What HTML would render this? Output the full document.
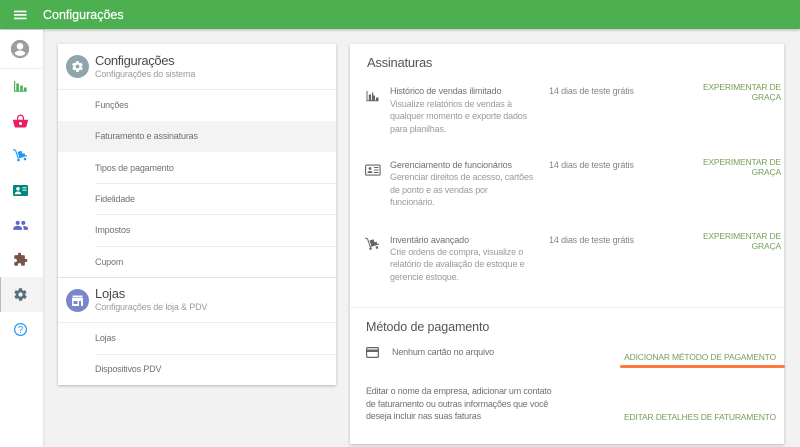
<!DOCTYPE html>
<html><head><meta charset="utf-8">
<style>
html,body{margin:0;padding:0}
body{width:800px;height:447px;overflow:hidden;background:#f2f2f2;position:relative;font-family:"Liberation Sans",sans-serif}
.t{position:absolute;white-space:nowrap;line-height:13px}
.m{font-size:9px;color:#707070;letter-spacing:-.17px}
.g{font-size:9px;color:#9a9a9a;letter-spacing:-.16px}
.lnk{font-size:8.5px;color:#769f58;text-align:right;letter-spacing:-.17px}
.h{position:absolute;background:#ececec;height:1px}
svg{position:absolute}
</style></head><body>
<div style="position:absolute;left:0;top:0;width:800px;height:29px;background:#4caf50;box-shadow:0 1px 3px rgba(0,0,0,.25)"></div>
<svg style="left:14px;top:10px" width="13" height="10" viewBox="0 0 13 10"><path fill="#fff" d="M0 .6h12.500v1.700H0zM0 4.100h12.500v1.700H0zM0 7.600h12.500v1.700H0z"/></svg>
<div class="t" style="left:43px;top:9px;font-size:12.500px;color:#fff;-webkit-text-stroke:.2px #fff">Configurações</div>

<div style="position:absolute;left:0;top:30px;width:43px;height:417px;background:#fff;box-shadow:1px 0 2px rgba(0,0,0,.08)"></div>
<div style="position:absolute;left:0;top:68px;width:43px;height:1px;background:#eee"></div>
<div style="position:absolute;left:0;top:277px;width:43px;height:35px;background:#f3f3f3;border-left:1px solid #b5bcc0;box-sizing:border-box"></div>
<svg style="left:9px;top:38px" width="22" height="22" viewBox="0 0 24 24"><path fill="#9e9e9e" d="M12 2a10 10 0 1 0 0 20 10 10 0 0 0 0-20zm0 3.400a3.600 3.600 0 1 1 0 7.200 3.600 3.600 0 0 1 0-7.200zm0 14.200a7.700 7.700 0 0 1-6-2.900c1-1.900 3.900-3 6-3s5 1.100 6 3a7.700 7.700 0 0 1-6 2.900z"/></svg>
<svg style="left:13px;top:80px" width="15" height="13" viewBox="0 0 15 13"><path fill="#4caf50" d="M1 1h1.200v10.800H1zM3.300 3.500h2.600v7.700H3.300zM7.200 5.500h2.600v5.700H7.200zM10.900 7.500h2.700v4.200h-2.700zM1 10.800h12.600v1H1z"/></svg>
<svg style="left:13px;top:114px" width="15" height="14" viewBox="0 0 15 14"><path fill="none" stroke="#e91e63" stroke-width="1.300" d="M4.600 6V4a2.900 2.900 0 0 1 5.800 0v2"/><path fill="#e91e63" d="M.5 5.800h14a.5.500 0 0 1 .5.700l-1.500 6a1.500 1.500 0 0 1-1.400 1H2.900a1.500 1.500 0 0 1-1.400-1L0 6.500a.5.500 0 0 1 .5-.7z"/><circle cx="7.500" cy="9.500" r="1.500" fill="#fff"/></svg>
<svg style="left:13px;top:149px" width="15" height="13" viewBox="0 0 15 13"><path fill="none" stroke="#2196f3" stroke-width="1.100" d="M0 .5l2.500.8 2.700 7.700 8.800-2.500"/><path fill="#2196f3" d="M4.500 3l4-1.300 1 3 2-.6 1 3-6 1.800z"/><circle cx="5.500" cy="11" r="1.300" fill="#2196f3"/><circle cx="12" cy="10" r="1.300" fill="#2196f3"/></svg>
<div style="position:absolute;left:13px;top:185px;width:14.500px;height:11px;background:#00897b;border-radius:1px"></div>
<svg style="left:13px;top:185px" width="15" height="11" viewBox="0 0 15 11"><circle cx="5" cy="3.800" r="1.800" fill="#fff"/><path fill="#fff" d="M1.800 9.200c0-1.900 1.600-2.700 3.200-2.700s3.200.8 3.200 2.700z"/><path fill="#a7d8d2" d="M9.500 2h4v1.500h-4zM9.500 4.500h4V6h-4z"/></svg>
<svg style="left:13px;top:218px" width="15" height="15" viewBox="0 0 24 24"><path fill="#5c6bc0" d="M16.500 11a3.200 3.200 0 1 0 0-6.400 3.200 3.200 0 0 0 0 6.400zm-9 0a3.200 3.200 0 1 0 0-6.400 3.200 3.200 0 0 0 0 6.400zm0 1.500c-2.500 0-7 1.300-7 3.800V19h14v-2.700c0-2.500-4.500-3.800-7-3.800zm9 0h-1c1.200.9 1.500 2.300 1.500 3.800V19h7v-2.700c0-2.500-5-3.800-7.500-3.800z"/></svg>
<svg style="left:13px;top:252px" width="15" height="15" viewBox="0 0 24 24"><path fill="#795548" d="M20.500 11H19V7a2 2 0 0 0-2-2h-4V3.500a2.500 2.500 0 0 0-5 0V5H4a2 2 0 0 0-2 2v3.800h1.500a2.700 2.700 0 0 1 0 5.400H2V20a2 2 0 0 0 2 2h3.800v-1.500a2.700 2.700 0 0 1 5.400 0V22H17a2 2 0 0 0 2-2v-4h1.500a2.500 2.500 0 0 0 0-5z"/></svg>
<svg style="left:13px;top:287px" width="15" height="15" viewBox="0 0 24 24"><path fill="#546e7a" d="M19.400 13a7.500 7.500 0 0 0 0-2l2.100-1.600a.5.500 0 0 0 .1-.6l-2-3.500a.5.500 0 0 0-.6-.2l-2.500 1a7.300 7.300 0 0 0-1.700-1l-.4-2.700a.5.500 0 0 0-.5-.4h-4a.5.500 0 0 0-.5.400l-.4 2.700a7.300 7.300 0 0 0-1.700 1l-2.500-1a.5.500 0 0 0-.6.2l-2 3.500a.5.500 0 0 0 .1.600L4.600 11a7.500 7.500 0 0 0 0 2l-2.100 1.600a.5.500 0 0 0-.1.600l2 3.500c.1.200.4.300.6.200l2.500-1c.5.400 1.100.7 1.700 1l.4 2.700c0 .2.200.4.500.4h4c.3 0 .5-.2.500-.4l.4-2.700c.6-.3 1.200-.6 1.700-1l2.500 1c.2.100.5 0 .6-.2l2-3.500a.5.500 0 0 0-.1-.6zM12 15.500a3.500 3.500 0 1 1 0-7 3.500 3.500 0 0 1 0 7z"/></svg>
<svg style="left:13px;top:322px" width="15" height="15" viewBox="0 0 15 15"><circle cx="7.500" cy="7.500" r="5.900" fill="none" stroke="#2196f3" stroke-width="1.200"/><text x="7.500" y="11" font-size="10" text-anchor="middle" fill="#2196f3" font-family="Liberation Sans">?</text></svg>

<!-- left card -->
<div style="position:absolute;left:58px;top:44px;width:278px;height:341px;background:#fff;box-shadow:0 1px 3px rgba(0,0,0,.25)"></div>
<div style="position:absolute;left:58px;top:121px;width:278px;height:31px;background:#f3f3f3"></div>
<div style="position:absolute;left:66px;top:55px;width:23px;height:23px;border-radius:50%;background:#90a4ae"></div>
<svg style="left:71px;top:60px" width="13" height="13" viewBox="0 0 24 24"><path fill="#fff" d="M19.400 13a7.500 7.500 0 0 0 0-2l2.100-1.600a.5.500 0 0 0 .1-.6l-2-3.500a.5.500 0 0 0-.6-.2l-2.500 1a7.300 7.300 0 0 0-1.700-1l-.4-2.700a.5.500 0 0 0-.5-.4h-4a.5.500 0 0 0-.5.400l-.4 2.700a7.300 7.300 0 0 0-1.700 1l-2.500-1a.5.500 0 0 0-.6.2l-2 3.500a.5.500 0 0 0 .1.600L4.600 11a7.500 7.500 0 0 0 0 2l-2.100 1.600a.5.500 0 0 0-.1.600l2 3.500c.1.200.4.300.6.200l2.500-1c.5.400 1.100.7 1.700 1l.4 2.700c0 .2.200.4.500.4h4c.3 0 .5-.2.500-.4l.4-2.700c.6-.3 1.200-.6 1.700-1l2.500 1c.2.100.5 0 .6-.2l2-3.500a.5.500 0 0 0-.1-.6zM12 15.500a3.500 3.500 0 1 1 0-7 3.500 3.500 0 0 1 0 7z"/></svg>
<div class="t" style="left:95px;top:54px;font-size:13px;color:#4a4a4a;line-height:14px;letter-spacing:-.35px">Configurações</div>
<div class="t g" style="left:95px;top:68px">Configurações do sistema</div>
<div class="h" style="left:58px;top:89px;width:278px"></div>
<div class="t m" style="left:95px;top:99px">Funções</div>
<div class="t m" style="left:95px;top:130px">Faturamento e assinaturas</div>
<div class="t m" style="left:95px;top:162px">Tipos de pagamento</div>
<div class="h" style="left:95px;top:183px;width:241px"></div>
<div class="t m" style="left:95px;top:193px">Fidelidade</div>
<div class="h" style="left:95px;top:214px;width:241px"></div>
<div class="t m" style="left:95px;top:224px">Impostos</div>
<div class="h" style="left:95px;top:246px;width:241px"></div>
<div class="t m" style="left:95px;top:256px">Cupom</div>
<div class="h" style="left:58px;top:277px;width:278px;background:#e2e2e2"></div>
<div style="position:absolute;left:66px;top:289px;width:23px;height:23px;border-radius:50%;background:#7986cb"></div>
<svg style="left:71px;top:294px" width="13" height="13" viewBox="0 0 13 13"><path fill="#fff" d="M1.500 1.500h10v2h-10zM1 4h11v8H1z"/><path fill="#7986cb" d="M2.500 7h4v3h-4zM8 7h2v5H8z"/></svg>
<div class="t" style="left:95px;top:287px;font-size:13px;color:#4a4a4a;line-height:14px;letter-spacing:-.2px">Lojas</div>
<div class="t g" style="left:95px;top:301px">Configurações de loja &amp; PDV</div>
<div class="h" style="left:58px;top:322px;width:278px"></div>
<div class="t m" style="left:95px;top:332px">Lojas</div>
<div class="h" style="left:95px;top:354px;width:241px"></div>
<div class="t m" style="left:95px;top:363px">Dispositivos PDV</div>

<!-- right card -->
<div style="position:absolute;left:350px;top:44px;width:434px;height:400px;background:#fff;box-shadow:0 1px 3px rgba(0,0,0,.25)"></div>
<div class="t" style="left:367px;top:56px;font-size:13px;color:#555;line-height:14px;letter-spacing:-.25px">Assinaturas</div>

<svg style="left:366px;top:90px" width="13" height="12" viewBox="0 0 13 12"><path fill="#666" d="M.5 1h1v10H.5zM2.800 4.500h2.300v6H2.800zM6 2.500h1.300v8H6zM7.300 5.500h1.700v5H7.300zM10 7.500h2.500v3H10zM.5 10.300h12v1H.5z"/></svg>
<div class="t m" style="left:390px;top:85px;letter-spacing:-.11px">Histórico de vendas ilimitado</div>
<div class="t g" style="left:390px;top:97.500px;line-height:12.500px">Visualize relatórios de vendas à<br>qualquer momento e exporte dados<br>para planilhas.</div>
<div class="t m" style="left:549px;top:85px;color:#858585;letter-spacing:-.14px">14 dias de teste grátis</div>
<div class="t lnk" style="right:19px;top:83px;line-height:9.500px">EXPERIMENTAR DE<br>GRAÇA</div>

<svg style="left:365px;top:164px" width="16" height="12" viewBox="0 0 16 12"><rect x=".6" y="1.100" width="14.500" height="10" rx="1" fill="none" stroke="#666" stroke-width="1.100"/><circle cx="5" cy="4.500" r="1.400" fill="#666"/><path fill="#666" d="M2.500 9c0-1.500 1.200-2 2.500-2s2.500.5 2.500 2zM9 3h4.500v1H9zM9 5.500h4.500v1H9zM9 8h4.500v1H9z"/></svg>
<div class="t m" style="left:390px;top:159px;letter-spacing:-.11px">Gerenciamento de funcionários</div>
<div class="t g" style="left:390px;top:171px;line-height:12.500px">Gerenciar direitos de acesso, cartões<br>de ponto e as vendas por<br>funcionário.</div>
<div class="t m" style="left:549px;top:159px;color:#858585;letter-spacing:-.14px">14 dias de teste grátis</div>
<div class="t lnk" style="right:19px;top:158px;line-height:9.500px">EXPERIMENTAR DE<br>GRAÇA</div>

<svg style="left:365px;top:237px" width="15" height="14" viewBox="0 0 15 13"><path fill="none" stroke="#666" stroke-width="1" d="M0 .5l2.500.8 2.700 7.700 8.800-2.500"/><path fill="#666" d="M4.500 3l4-1.300 1 3 2-.6 1 3-6 1.800z"/><circle cx="5.500" cy="11" r="1.300" fill="#666"/><circle cx="12" cy="10" r="1.300" fill="#666"/></svg>
<div class="t m" style="left:390px;top:233.500px;letter-spacing:-.11px">Inventário avançado</div>
<div class="t g" style="left:390px;top:245.500px;line-height:12.500px">Crie ordens de compra, visualize o<br>relatório de avaliação de estoque e<br>gerencie estoque.</div>
<div class="t m" style="left:549px;top:233.500px;color:#858585;letter-spacing:-.14px">14 dias de teste grátis</div>
<div class="t lnk" style="right:19px;top:232px;line-height:9.500px">EXPERIMENTAR DE<br>GRAÇA</div>

<div class="h" style="left:350px;top:307px;width:434px;background:#f0f0f0"></div>
<div class="t" style="left:366px;top:320px;font-size:12.500px;color:#555;line-height:14px;letter-spacing:-.1px">Método de pagamento</div>
<svg style="left:366px;top:347px" width="13" height="11" viewBox="0 0 13 11"><rect x=".6" y=".6" width="11.800" height="9.800" rx="1" fill="none" stroke="#666" stroke-width="1.200"/><rect x="1" y="2.500" width="11" height="2.500" fill="#666"/></svg>
<div class="t m" style="left:392px;top:346px">Nenhum cartão no arquivo</div>
<div class="t lnk" style="right:24px;top:351px">ADICIONAR MÉTODO DE PAGAMENTO</div>
<div style="position:absolute;left:620px;top:365px;width:164.500px;height:3px;background:#ff7a3d;border-radius:2px"></div>
<div class="t m" style="left:366px;top:385px;line-height:12.500px;letter-spacing:-.2px">Editar o nome da empresa, adicionar um contato<br>de faturamento ou outras informações que você<br>deseja incluir nas suas faturas</div>
<div class="t lnk" style="right:24px;top:411px">EDITAR DETALHES DE FATURAMENTO</div>
</body></html>
